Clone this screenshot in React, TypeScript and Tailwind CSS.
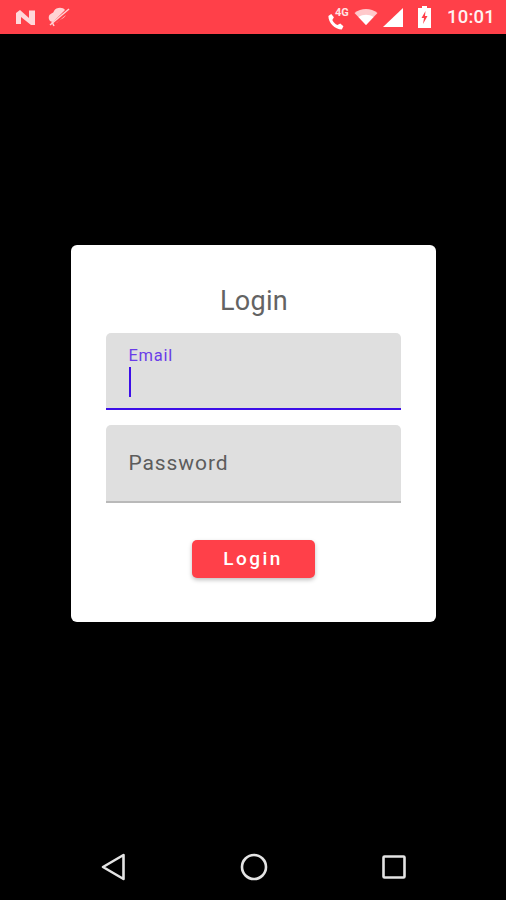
function StatusBar() {
  return (
    <div className="h-[34px] bg-[#ff4049] flex items-center justify-between pl-[15px] pr-[11px] text-white">
      <div className="flex items-center gap-[10px]">
        {/* N logo */}
        <svg width="21" height="17" viewBox="0 0 21 17" className="opacity-90">
          <path d="M1 4 L5 1 L14 9 L14 1.5 L20 1.5 L20 16 L16 16 L6 8 L6 15 L1 15 Z" fill="#ffe9ea" />
        </svg>
        {/* muted notification */}
        <svg width="24" height="20" viewBox="0 0 24 20" className="opacity-90">
          <path d="M3 9 C4 6 7 7 8 4 C10 0 17 0 19 3 L7 15 C4 15 2 12 3 9 Z" fill="#ffe3e4" />
          <path d="M4 18 L23 2" stroke="#ffe3e4" strokeWidth="1.5" />
          <path d="M14 13 C12 15 10 16 9 17 L20 8 C19 10 16 12 14 13 Z" fill="#ffe3e4" />
          <path d="M6 15 L8 19" stroke="#ffe3e4" strokeWidth="1.5" />
        </svg>
      </div>
      <div className="flex items-center">
        {/* call with 4G */}
        <div className="relative w-[20px] h-[24px] mr-[8px]">
          <svg width="19" height="19" viewBox="0 0 24 24" className="absolute left-0 top-[7px]">
            <path d="M6.6 2.5 L10 6.5 L8 10 C9.5 13 11.5 15 14.5 16.5 L18 14.5 L22 18 L20 22 C11 22 3 13.5 3 5 Z" fill="white" />
          </svg>
          <span className="absolute left-[9px] top-[1px] text-[11px] leading-[14px] font-bold font-['Roboto',sans-serif] text-[#ffe3e4]">4G</span>
        </div>
        {/* wifi */}
        <svg width="24" height="18" viewBox="0 0 24 18" className="mr-[5px]">
          <path d="M12 17 L0.5 5 C7 -0.5 17 -0.5 23.5 5 Z" fill="#ffc9cb" />
          <path d="M12 17 L4.5 9 C9 6 15 6 19.5 9 Z" fill="white" />
        </svg>
        {/* signal */}
        <svg width="21" height="21" viewBox="0 0 21 21" className="mr-[13px]">
          <path d="M0 20 L20 1 L20 20 Z" fill="white" />
        </svg>
        {/* battery */}
        <svg width="15" height="22" viewBox="0 0 15 22" className="mr-[15px]">
          <path d="M5 0 H10 V2 H14 V22 H1 V2 H5 Z" fill="white" />
          <path d="M8.5 5 L4.5 12 H7 L6 18 L10.5 10 H8 Z" fill="#ff4049" />
        </svg>
        <span className="text-[18.5px] leading-[24px] font-['Roboto',sans-serif] font-medium tracking-[0.2px] text-[#fff2f2]">10:01</span>
      </div>
    </div>
  );
}

function LoginCard() {
  return (
    <div className="w-[365px] h-[377px] bg-white rounded-[6px] px-[35px] pt-[39px] font-['Roboto',sans-serif]">
      <h1 className="text-center pl-[2px] text-[27px] leading-[34px] text-[#636363] tracking-[0.3px] mb-[15px]">Login</h1>

      {/* Email, focused */}
      <div className="h-[77px] bg-[#dfdfdf] rounded-t-[5px] border-b-2 border-[#3d0fe8] pl-[23px] pt-[13px] mb-[15px]">
        <div className="text-[16.5px] leading-[20px] text-[#6a3de8] tracking-[0.7px]">Email</div>
        <div className="w-[2px] h-[30px] bg-[#3d0fe8] mt-[1px]" />
      </div>

      {/* Password */}
      <div className="h-[78px] bg-[#dfdfdf] rounded-t-[5px] border-b-2 border-[#b9b9b9] pl-[23px] flex items-center">
        <span className="text-[21px] leading-[26px] text-[#5c5c5c] tracking-[0.9px]">Password</span>
      </div>

      <div className="flex justify-center mt-[37px]">
        <button className="w-[123px] h-[38px] pt-[1px] bg-[#ff4049] rounded-[5px] shadow-[0_2px_4px_rgba(0,0,0,0.25)] text-white text-[19px] font-medium tracking-[2.5px]">
          Login
        </button>
      </div>
    </div>
  );
}

function NavBar() {
  return (
    <div className="h-[67px] flex items-center justify-center gap-[114px] pl-[1px]">
      <svg width="25" height="28" viewBox="0 0 25 28" fill="none" stroke="#e4e4e4" strokeWidth="2.6" strokeLinejoin="round">
        <path d="M22.5 2 V26 L2 14 Z" />
      </svg>
      <svg width="28" height="28" viewBox="0 0 28 28" fill="none" stroke="#e4e4e4" strokeWidth="2.6">
        <circle cx="14" cy="14" r="12" />
      </svg>
      <svg width="24" height="24" viewBox="0 0 24 24" fill="none" stroke="#e4e4e4" strokeWidth="2.6" strokeLinejoin="round">
        <rect x="1.5" y="1.5" width="21" height="21" rx="1" />
      </svg>
    </div>
  );
}

export default function App() {
  return (
    <div className="w-[506px] h-[900px] bg-black flex flex-col overflow-hidden">
      <StatusBar />
      <div className="flex-1 flex items-center justify-center">
        <LoginCard />
      </div>
      <NavBar />
    </div>
  );
}
